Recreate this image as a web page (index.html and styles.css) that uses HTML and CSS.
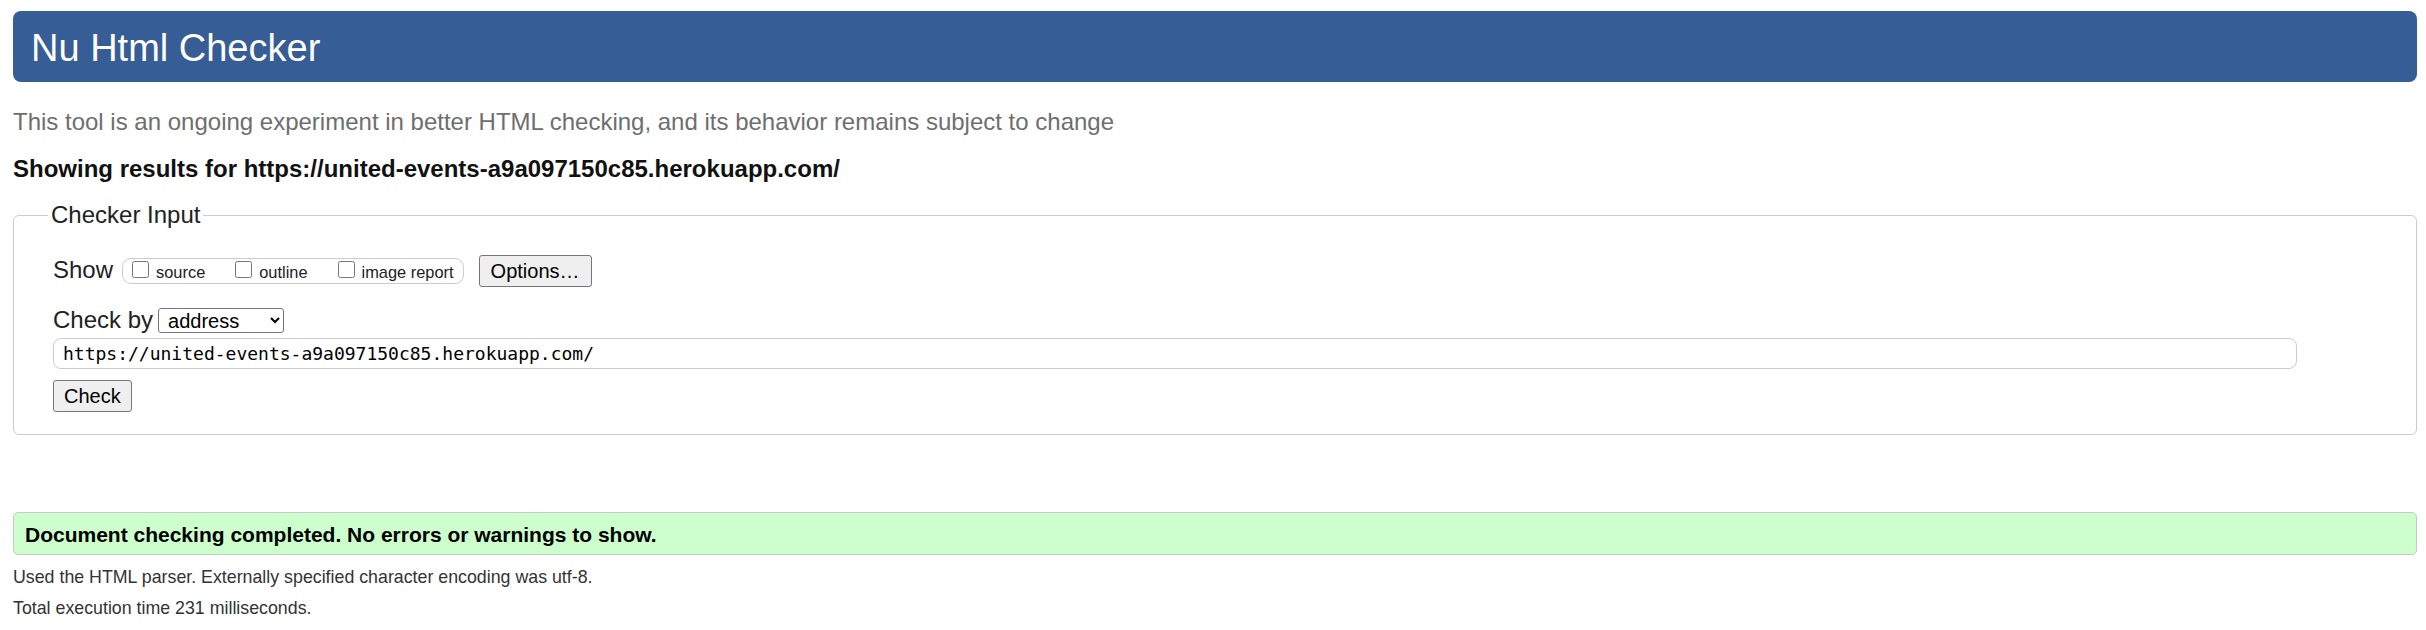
FILE: index.html
```html
<!DOCTYPE html>
<html lang="en">
<head>
<meta charset="utf-8">
<title>Showing results for https://united-events-a9a097150c85.herokuapp.com/ - Nu Html Checker</title>
<link rel="stylesheet" href="styles.css">
</head>
<body>
<h1 class="title">Nu Html Checker</h1>
<p class="about">This tool is an ongoing experiment in better HTML checking, and its behavior remains subject to change</p>
<p class="results">Showing results for https://united-events-a9a097150c85.herokuapp.com/</p>
<form class="checker">
<fieldset class="checker-box">
<legend class="checker-legend">Checker Input</legend>
<div class="row show-row">
<span class="row-label">Show</span>
<span class="show-group"><label class="opt"><input type="checkbox" class="cb">source</label><label class="opt"><input type="checkbox" class="cb">outline</label><label class="opt"><input type="checkbox" class="cb">image report</label></span>
<button type="button" class="btn btn-options">Options…</button>
</div>
<div class="row by-row">
<span class="row-label">Check by</span>
<select class="by-select"><option>address</option></select>
</div>
<input class="url" type="url" value="https://united-events-a9a097150c85.herokuapp.com/">
<button type="button" class="btn btn-check">Check</button>
</fieldset>
</form>
<p class="success">Document checking completed. No errors or warnings to show.</p>
<p class="detail">Used the HTML parser. Externally specified character encoding was utf-8.</p>
<p class="detail detail-last">Total execution time 231 milliseconds.</p>
</body>
</html>
```
FILE: styles.css
```css
html {
  background: #fff;
}

body {
  margin: 0 9px 0 13px;
  font-family: "Liberation Sans", Arial, sans-serif;
  color: #000;
}

.title {
  margin: 11px 0 0;
  height: 71px;
  box-sizing: border-box;
  padding: 2px 18px 0;
  display: flex;
  align-items: center;
  background: #365d95;
  color: #fff;
  font-size: 38px;
  line-height: 44px;
  font-weight: normal;
  border-radius: 8px;
}

.about {
  margin: 26px 0 0;
  font-size: 24px;
  line-height: 28px;
  color: #6e6e6e;
}

.results {
  margin: 19px 0 0;
  font-size: 24px;
  line-height: 28px;
  font-weight: bold;
  color: #111;
}

.checker {
  margin: 18px 0 0;
}

.checker-box {
  margin: 0;
  min-width: 0;
  border: 1px solid #ccc;
  border-radius: 6px;
  padding: 0 39px 22px;
  display: flex;
  flex-direction: column;
  align-items: flex-start;
}

.checker-legend {
  font-size: 24px;
  line-height: 28px;
  padding: 0 3px;
  margin-left: -5px;
  color: #222;
}

.row {
  display: flex;
  align-items: baseline;
}

.show-row {
  margin-top: 26px;
}

.by-row {
  margin-top: 19px;
}

.row-label {
  font-size: 24px;
  line-height: 28px;
  color: #222;
}

.show-group {
  margin-left: 9px;
  border: 1px solid #ccc;
  border-radius: 9px;
  padding: 2px 9px 0;
  font-size: 16.4px;
  line-height: 21px;
  color: #222;
}

.opt {
  margin-right: 30px;
}

.opt:last-child {
  margin-right: 0;
}

.cb {
  width: 17px;
  height: 17px;
  margin: 0 7px 1px 0;
  vertical-align: baseline;
}

.btn {
  height: 32px;
  box-sizing: border-box;
  padding: 0 10px;
  font-family: "Liberation Sans", Arial, sans-serif;
  font-size: 20px;
  color: #000;
  background: #efefef;
  border: 1px solid #767676;
  border-radius: 3px;
}

.btn-options {
  margin-left: 15px;
  padding: 0 11px;
}

.by-select {
  margin-left: 5px;
  width: 126px;
  height: 25px;
  box-sizing: border-box;
  padding: 0 0 0 5px;
  font-family: "Liberation Sans", Arial, sans-serif;
  font-size: 20px;
  color: #000;
  background: #fff;
  border: 1px solid #767676;
  border-radius: 3px;
}

.url {
  margin: 4px 0 0;
  width: calc(100% - 80px);
  height: 31px;
  box-sizing: border-box;
  padding: 0 9px;
  font-family: "DejaVu Sans Mono", "Liberation Mono", monospace;
  font-size: 18px;
  color: #000;
  border: 1px solid #ccc;
  border-radius: 8px;
  outline: none;
}

.btn-check {
  margin-top: 11px;
}

.success {
  margin: 77px 0 0;
  padding: 10px 11px 7px;
  background: #ccffcc;
  border: 1px solid #c8c8c8;
  border-radius: 5px;
  font-size: 21px;
  line-height: 24px;
  font-weight: bold;
  color: #000;
}

.detail {
  margin: 12px 0 0;
  font-size: 17.8px;
  line-height: 20px;
  color: #333;
}

.detail-last {
  margin-top: 11px;
}
```
